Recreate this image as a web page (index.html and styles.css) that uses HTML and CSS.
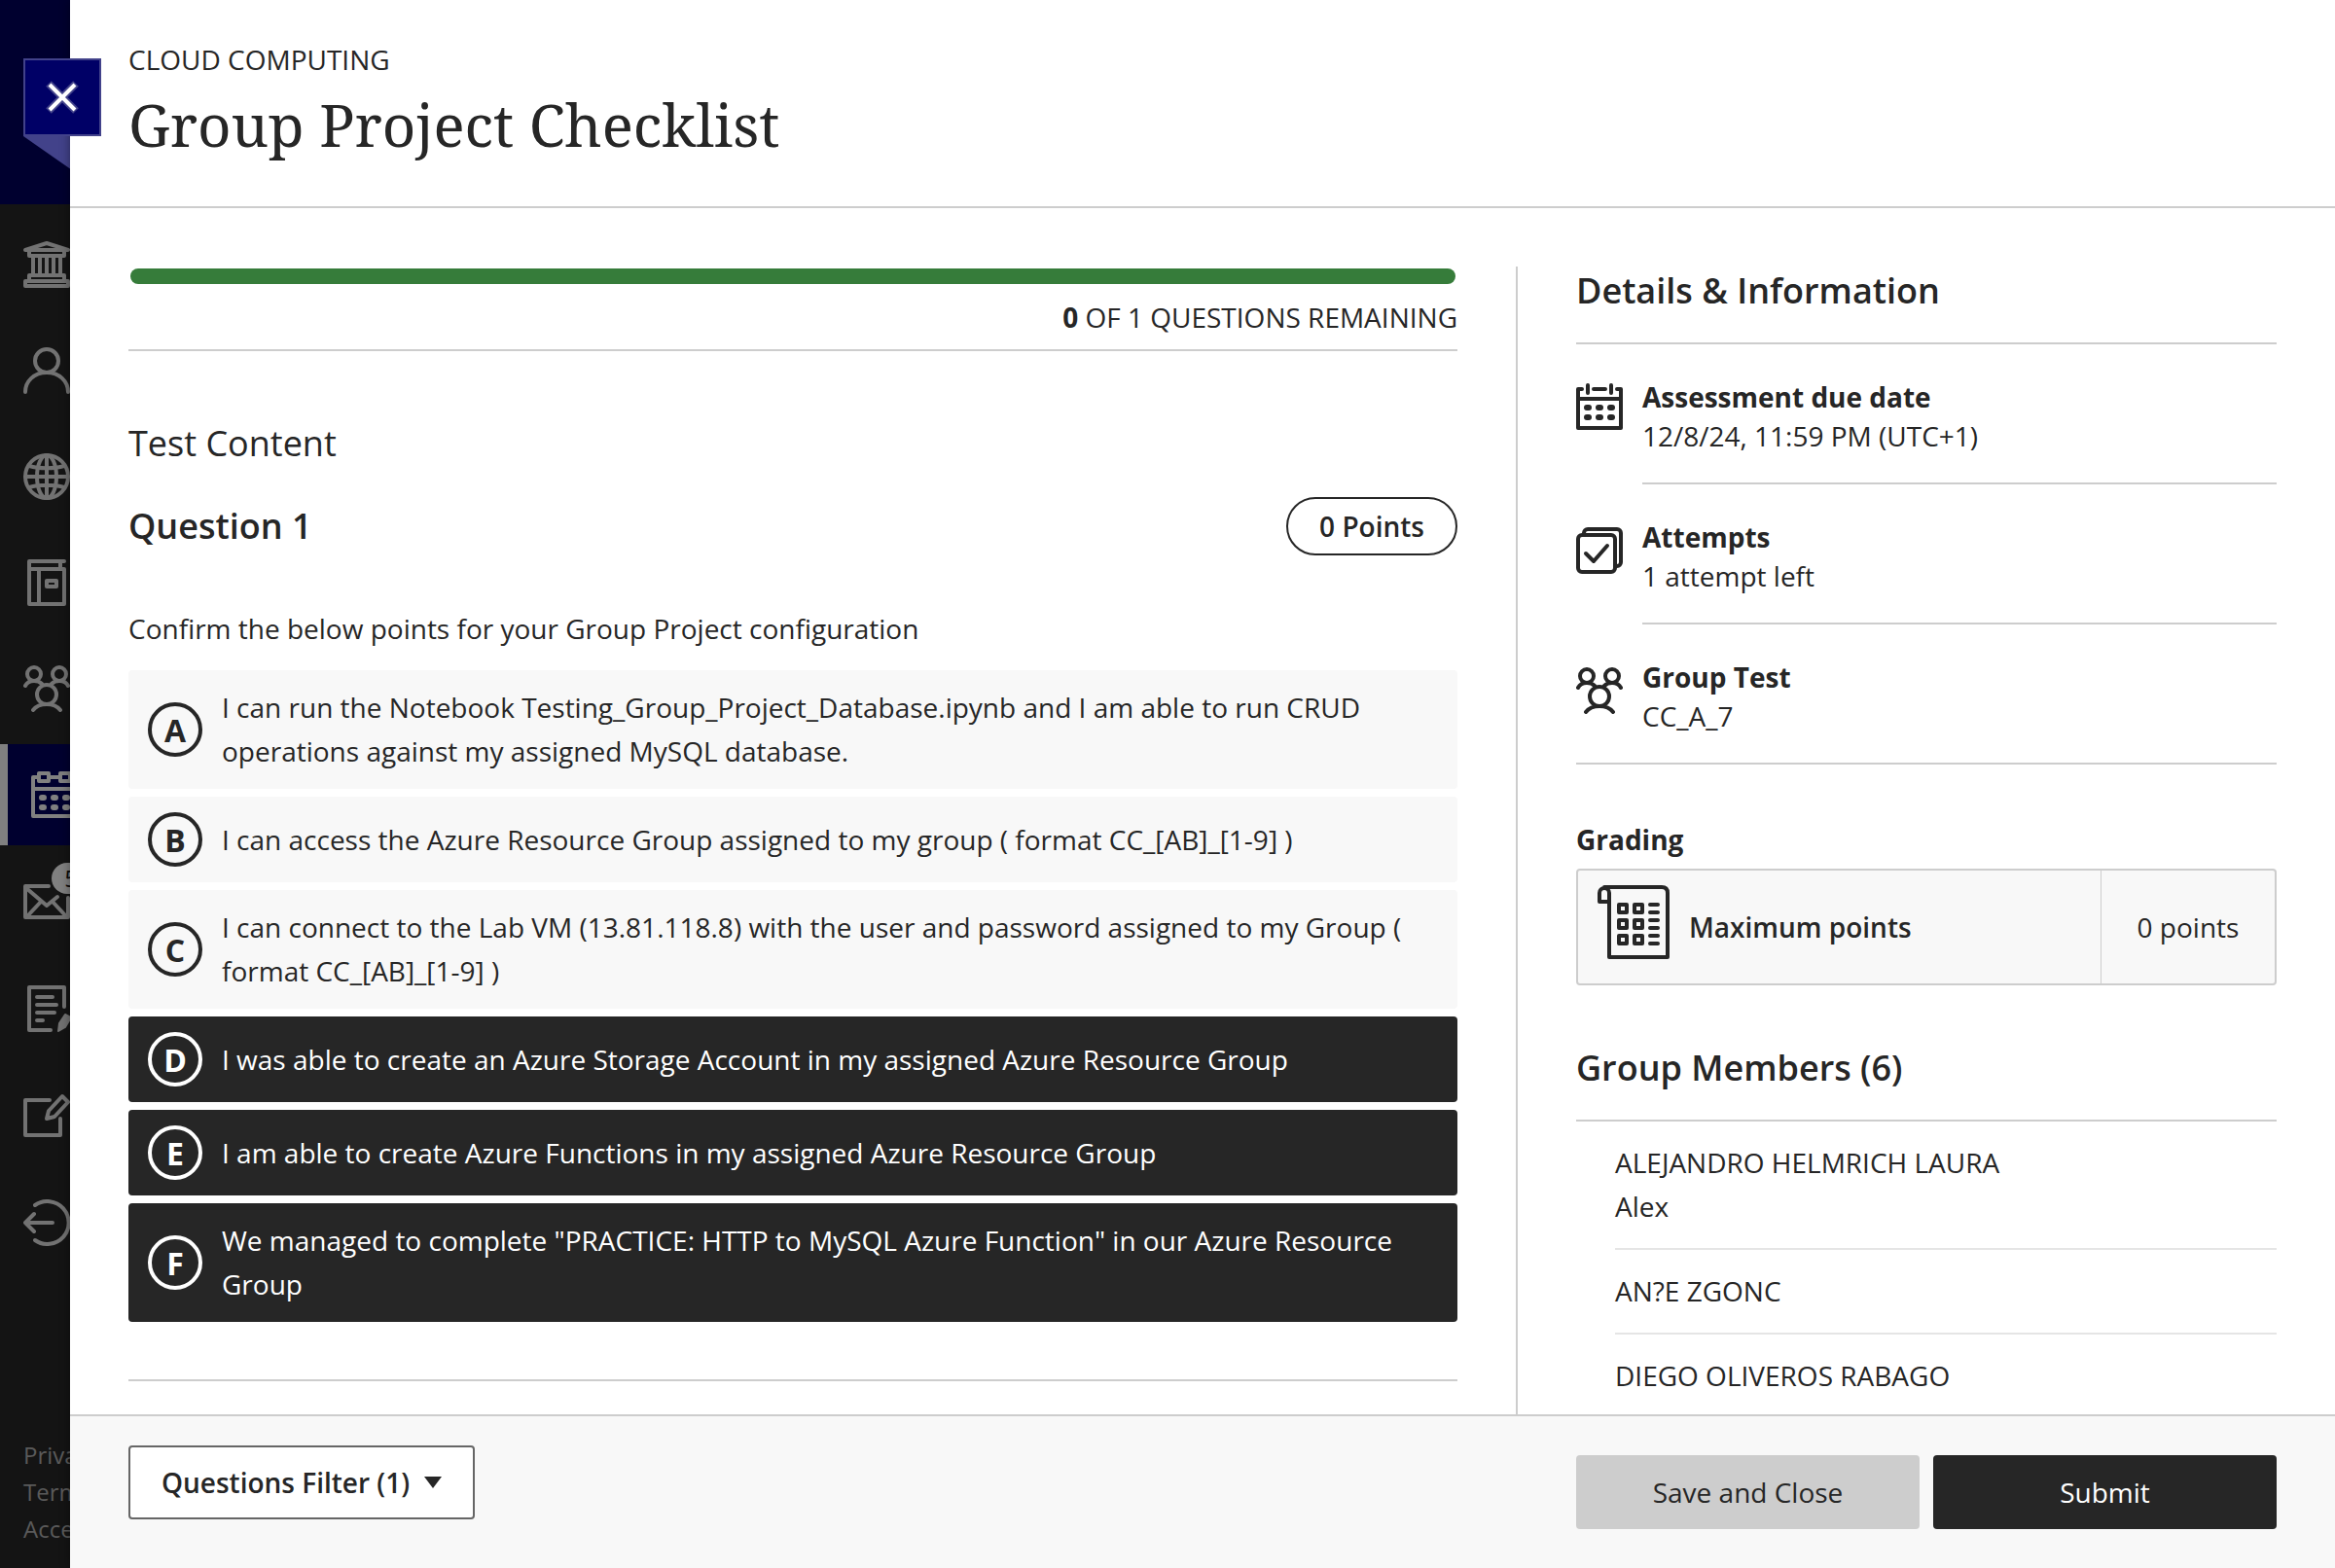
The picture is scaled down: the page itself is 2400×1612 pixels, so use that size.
FILE: index.html
```html
<!DOCTYPE html>
<html lang="en">
<head>
<meta charset="utf-8">
<meta name="viewport" content="width=device-width, initial-scale=1">
<title>Group Project Checklist</title>
<link rel="stylesheet" href="styles.css">
</head>
<body>
<svg class="sprite" aria-hidden="true">
  <symbol id="icon-group" viewBox="0 0 48 48">
    <circle cx="11" cy="9" r="7"/><circle cx="37" cy="9" r="7"/><circle cx="24" cy="30" r="10"/>
    <path d="M2 21c2-4 5-5 9-5s6 1 8 3M46 21c-2-4-5-5-9-5s-6 1-8 3M10 46c3-4 8-6 14-6s11 2 14 6"/>
  </symbol>
</svg>
<div class="app">
  <nav class="sidebar" aria-label="Main">
    <div class="brand"></div>
    <ul class="nav-list">
      <li><a class="nav-item" href="#institution" aria-label="Institution"><svg class="icon" viewBox="0 0 48 48"><path d="M2 9 24 2l22 7zM6 11v4h36v-4M10 16v17M17 16v17M24 16v17M31 16v17M38 16v17M6 41v-6h36v6M2 41h44v5H2z"/></svg></a></li>
      <li><a class="nav-item" href="#profile" aria-label="Profile"><svg class="icon" viewBox="0 0 48 48"><circle cx="24" cy="14" r="12"/><path d="M2 46c0-11 9-20 22-20s22 9 22 20"/></svg></a></li>
      <li><a class="nav-item" href="#activity" aria-label="Activity"><svg class="icon" viewBox="0 0 48 48"><circle cx="24" cy="24" r="22"/><ellipse cx="24" cy="24" rx="10" ry="22"/><path d="M24 2v44M2 24h44M6 13c10 3 26 3 36 0M6 35c10-3 26-3 36 0"/></svg></a></li>
      <li><a class="nav-item" href="#courses" aria-label="Courses"><svg class="icon" viewBox="0 0 48 48"><path d="M42 2H6v44h36V10H6M38 2v8M16 10v36M24 22h10v6H24z"/></svg></a></li>
      <li><a class="nav-item" href="#organizations" aria-label="Organizations"><svg class="icon"><use href="#icon-group"/></svg></a></li>
      <li><a class="nav-item nav-item-active" href="#calendar" aria-label="Calendar"><svg class="icon" viewBox="0 0 48 48"><path d="M7 6H2v40h44V6h-5M19 6h10M2 18h44M8 2h10v8H8zM30 2h10v8H30z"/><path d="M11 27h2M23 27h2M35 27h2M11 37h2M23 37h2M35 37h2" stroke-width="6"/></svg></a></li>
    </ul>
    <ul class="nav-list nav-list-more">
      <li><a class="nav-item" href="#messages" aria-label="Messages"><svg class="icon" viewBox="0 0 48 48"><path d="M26 8H2v32h44V20M3 10l21 18 11-9M4 39l14-15M44 39 30 24"/></svg><span class="badge">5</span></a></li>
      <li><a class="nav-item" href="#grades" aria-label="Grades"><svg class="icon" viewBox="0 0 48 48"><path d="M42 22V2H6v44h22M14 12h16M14 20h20M14 28h18M14 36h6"/><path d="M43 30l6 3-6 10-7 4 1-8z" fill="currentColor" stroke-width="2"/></svg></a></li>
      <li><a class="nav-item" href="#tools" aria-label="Tools"><svg class="icon" viewBox="0 0 48 48"><path d="M27 8H2v36h36V27M40 4l6 6-14 15-8 2 2-8z"/></svg></a></li>
      <li><a class="nav-item" href="#signout" aria-label="Sign out"><svg class="icon" viewBox="0 0 48 48"><path d="M12 6a22 22 0 1 1 0 36M2 24h28M11 15l-9 9 9 9"/></svg></a></li>
    </ul>
    <div class="legal">
      <a href="#privacy">Privacy</a>
      <a href="#terms">Terms</a>
      <a href="#accessibility">Accessibility</a>
    </div>
  </nav>

  <div class="panel">
    <button class="close" type="button" aria-label="Close">
      <svg viewBox="0 0 36 36"><path class="close-edge" d="M4 4l28 28M32 4 4 32"/><path d="M5 5l26 26M31 5 5 31"/></svg>
    </button>
    <header class="panel-header">
      <p class="course">CLOUD COMPUTING</p>
      <h1>Group Project Checklist</h1>
    </header>

    <div class="panel-body">
      <main class="content">
        <section class="progress-block">
          <progress class="progress" value="1" max="1" aria-label="Questions answered"></progress>
          <p class="remaining"><b>0</b> OF 1 QUESTIONS REMAINING</p>
        </section>
        <h2 class="section-title">Test Content</h2>
        <div class="question-head">
          <h3>Question 1</h3>
          <span class="points">0 Points</span>
        </div>
        <p class="prompt">Confirm the below points for your Group Project configuration</p>
        <div class="options">
          <label class="option"><input type="checkbox"><span class="letter">A</span><span class="answer">I can run the Notebook Testing_Group_Project_Database.ipynb and I am able to run CRUD operations against my assigned MySQL database.</span></label>
          <label class="option"><input type="checkbox"><span class="letter">B</span><span class="answer">I can access the Azure Resource Group assigned to my group ( format CC_[AB]_[1-9] )</span></label>
          <label class="option"><input type="checkbox"><span class="letter">C</span><span class="answer">I can connect to the Lab VM (13.81.118.8) with the user and password assigned to my Group ( format CC_[AB]_[1-9] )</span></label>
          <label class="option"><input type="checkbox" checked><span class="letter">D</span><span class="answer">I was able to create an Azure Storage Account in my assigned Azure Resource Group</span></label>
          <label class="option"><input type="checkbox" checked><span class="letter">E</span><span class="answer">I am able to create Azure Functions in my assigned Azure Resource Group</span></label>
          <label class="option"><input type="checkbox" checked><span class="letter">F</span><span class="answer">We managed to complete "PRACTICE: HTTP to MySQL Azure Function" in our Azure Resource Group</span></label>
        </div>
        <hr class="rule">
      </main>

      <aside class="details">
        <h2 class="details-title">Details &amp; Information</h2>
        <ul class="facts">
          <li class="fact">
            <svg class="fact-icon" viewBox="0 0 48 52"><path d="M6 6H2v40h44V6h-4M18 6h12M2 16h44M12 2v8M36 2v8"/><path d="M11 25h2M23 25h2M35 25h2M11 35h2M23 35h2M35 35h2" stroke-width="6"/></svg>
            <div class="fact-text"><strong>Assessment due date</strong><span>12/8/24, 11:59 PM (UTC+1)</span></div>
          </li>
          <li class="fact">
            <svg class="fact-icon" viewBox="0 0 48 52"><rect x="2" y="12" width="38" height="38" rx="4"/><path d="M8 12v-2a4 4 0 0 1 4-4h30a4 4 0 0 1 4 4v30a4 4 0 0 1-4 4h-2M10 31l8 8 14-16"/></svg>
            <div class="fact-text"><strong>Attempts</strong><span>1 attempt left</span></div>
          </li>
          <li class="fact">
            <svg class="fact-icon" viewBox="0 0 48 52"><use href="#icon-group" y="4" width="48" height="48"/></svg>
            <div class="fact-text"><strong>Group Test</strong><span>CC_A_7</span></div>
          </li>
        </ul>
        <h3 class="grading-title">Grading</h3>
        <dl class="grading">
          <dt><svg class="grading-icon" viewBox="0 0 74 76"><path d="M12 74V8a5 5 0 0 0-10 0v9h10M7 2h59q6 0 6 6v66H12"/><path d="M22 20h8v8h-8zM38 20h8v8h-8zM22 36h8v8h-8zM38 36h8v8h-8zM22 52h8v8h-8zM38 52h8v8h-8zM54 20h8M54 28h8M54 36h8M54 44h8M54 52h8M54 60h8"/></svg>Maximum points</dt>
          <dd>0 points</dd>
        </dl>
        <h2 class="details-title">Group Members (6)</h2>
        <ul class="members">
          <li>ALEJANDRO HELMRICH LAURA<br>Alex</li>
          <li>AN?E ZGONC</li>
          <li>DIEGO OLIVEROS RABAGO</li>
        </ul>
      </aside>
    </div>

    <footer class="panel-footer">
      <button class="button button-filter" type="button">Questions Filter (1)<svg class="caret" viewBox="0 0 18 12"><path d="M0 0h18L9 12z"/></svg></button>
      <div class="actions">
        <button class="button button-save" type="button">Save and Close</button>
        <button class="button button-submit" type="button">Submit</button>
      </div>
    </footer>
  </div>
</div>
</body>
</html>
```
FILE: styles.css
```css
* { box-sizing: border-box; }

body {
  margin: 0;
  font: 28px/45px "Open Sans", "Noto Sans", sans-serif;
  color: #262626;
  background: #141414;
}

h1, h2, h3, p, ul, dl, dd { margin: 0; padding: 0; }
ul { list-style: none; }
button { font: inherit; color: inherit; cursor: pointer; }

.sprite { position: absolute; width: 0; height: 0; }

svg {
  fill: none;
  stroke: currentColor;
  stroke-width: 4;
  stroke-linecap: round;
  stroke-linejoin: round;
}

.app { display: flex; height: 100vh; overflow: hidden; }

/* Sidebar */
.sidebar {
  flex: 0 0 72px;
  display: flex;
  flex-direction: column;
  overflow: hidden;
  background: #141414;
  color: #727272;
}

.brand {
  position: relative;
  flex: 0 0 210px;
  margin-bottom: 10px;
  background: #00002f;
}

.brand::before {
  content: "";
  position: absolute;
  left: 24px;
  top: 140px;
  width: 80px;
  height: 56px;
  background: #42428a;
  clip-path: polygon(0 0, 100% 0, 100% 100%);
}

.nav-list { display: flex; flex-direction: column; gap: 5px; }
.nav-list-more { gap: 6px; margin-top: 6px; }

.nav-item {
  position: relative;
  display: flex;
  align-items: center;
  height: 104px;
  padding-left: 24px;
  color: inherit;
}

.nav-item-active {
  border-left: 8px solid #808080;
  background: #00002f;
  color: #808080;
}

.icon { flex: none; width: 48px; height: 48px; }

.badge {
  position: absolute;
  left: 53px;
  top: 12px;
  width: 40px;
  border-radius: 16px;
  background: #808080;
  color: #0a0a0a;
  font-size: 24px;
  line-height: 32px;
  text-align: center;
}

.legal {
  display: flex;
  flex-direction: column;
  margin-top: auto;
  padding: 0 0 21px 24px;
  font-size: 24px;
  line-height: 38px;
}

.legal a { color: #5a5a5a; text-decoration: none; }

/* Panel */
.panel {
  position: relative;
  flex: 1;
  min-width: 0;
  display: flex;
  flex-direction: column;
  background: #fff;
  box-shadow: 0 0 10px rgba(0, 0, 0, 0.4);
}

.close {
  position: absolute;
  left: -48px;
  top: 60px;
  width: 80px;
  height: 80px;
  display: grid;
  place-items: center;
  padding: 0;
  border: 2px solid #42428a;
  background: #000066;
  color: #fff;
}

.close svg { width: 36px; height: 36px; stroke-linecap: butt; }
.close-edge { stroke: #42428a; stroke-width: 8; }

.panel-header {
  padding: 41px 60px 44px;
  border-bottom: 2px solid #cdcdcd;
}

.course { line-height: 40px; }

h1 {
  margin-top: 7px;
  font: 400 60px/80px "Noto Serif", "Droid Serif", "DejaVu Serif", serif;
}

.panel-body {
  flex: 1;
  min-height: 0;
  display: flex;
  padding: 60px 60px 0;
  overflow: hidden;
}

.content { flex: 1; min-width: 0; padding-right: 60px; }

.progress-block {
  padding: 2px 0 13px;
  border-bottom: 2px solid #cdcdcd;
}

.progress {
  display: block;
  width: calc(100% - 4px);
  height: 16px;
  margin: 0 2px 14px;
  border: 0;
  border-radius: 8px;
  overflow: hidden;
  appearance: none;
  background: #e5e5e5;
}

.progress::-webkit-progress-bar { background: #e5e5e5; }
.progress::-webkit-progress-value { background: #367c3a; }
.progress::-moz-progress-bar { background: #367c3a; }

.remaining { line-height: 40px; text-align: right; }

.section-title {
  margin-top: 70px;
  font-size: 36px;
  font-weight: 400;
  line-height: 50px;
}

.question-head {
  display: flex;
  align-items: center;
  justify-content: space-between;
  margin-top: 30px;
}

.question-head h3 { font-size: 36px; font-weight: 600; line-height: 50px; }

.points {
  padding: 6px 32px;
  border: 2px solid #262626;
  border-radius: 30px;
  font-weight: 600;
  line-height: 44px;
}

.prompt { margin-top: 53px; }

.options { display: grid; gap: 8px; margin-top: 20px; }

.option {
  display: grid;
  grid-template-columns: 56px 1fr;
  align-items: center;
  column-gap: 20px;
  padding: 16px 20px;
  border-radius: 4px;
  background: #f8f8f8;
}

.option:has(:checked) { background: #262626; color: #fff; }

.option input {
  grid-area: 1 / 1;
  appearance: none;
  width: 56px;
  height: 56px;
  margin: 0;
  border: 4px solid currentColor;
  border-radius: 50%;
  color: inherit;
}

.letter {
  grid-area: 1 / 1;
  font-size: 32px;
  font-weight: 700;
  text-align: center;
}

.answer { grid-area: 1 / 2; }

.rule {
  margin: 59px 0 0;
  border: 0;
  border-top: 2px solid #cdcdcd;
}

/* Details column */
.details {
  flex: 0 0 782px;
  padding-left: 60px;
  border-left: 2px solid #cdcdcd;
}

.details-title {
  padding-bottom: 28px;
  border-bottom: 2px solid #cdcdcd;
  font-size: 36px;
  font-weight: 600;
  line-height: 50px;
}

.facts { border-bottom: 2px solid #cdcdcd; }

.fact { display: flex; gap: 20px; }

.fact-icon { flex: none; width: 48px; height: 52px; margin-top: 40px; }

.fact-text {
  flex: 1;
  display: flex;
  flex-direction: column;
  padding: 34px 0 28px;
  border-bottom: 2px solid #cdcdcd;
  line-height: 40px;
}

.fact:last-child .fact-text { border-bottom: 0; }

.grading-title {
  margin-top: 57px;
  font-size: 28px;
  font-weight: 700;
  line-height: 40px;
}

.grading {
  display: flex;
  height: 120px;
  margin: 10px 0 60px;
  border: 2px solid #cdcdcd;
  border-radius: 4px;
  background: #f8f8f8;
}

.grading dt {
  flex: 1;
  display: flex;
  align-items: center;
  gap: 20px;
  padding-left: 20px;
  font-weight: 600;
}

.grading-icon { align-self: flex-start; width: 74px; height: 76px; margin-top: 15px; }

.grading dd {
  flex: 0 0 179px;
  display: grid;
  place-items: center;
  border-left: 1px solid #cdcdcd;
}

.members { padding-left: 40px; }
.members li { padding: 20px 0; border-bottom: 2px solid #e5e5e5; }

/* Footer */
.panel-footer {
  display: flex;
  justify-content: space-between;
  align-items: flex-start;
  padding: 30px 60px 40px;
  border-top: 2px solid #cdcdcd;
  background: #f8f8f8;
}

.button {
  height: 76px;
  padding: 0 32px;
  border: 2px solid transparent;
  border-radius: 4px;
}

.button-filter {
  display: flex;
  align-items: center;
  gap: 15px;
  border-color: #666;
  background: #fff;
  font-weight: 600;
}

.caret { width: 18px; height: 12px; fill: currentColor; stroke: none; }

.actions {
  flex: 0 0 720px;
  display: grid;
  grid-template-columns: 1fr 1fr;
  gap: 14px;
  margin-top: 10px;
}

.button-save { background: #cdcdcd; }
.button-submit { background: #262626; color: #fff; }
```
